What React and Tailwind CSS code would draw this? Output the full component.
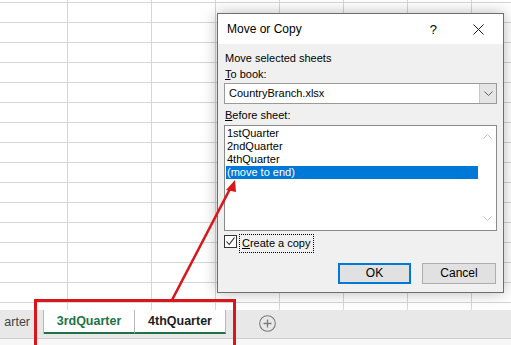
import React from 'react';

const colClasses = ['w-[68px]', 'w-[84px]', 'w-[64px]', 'w-[64px]', 'w-[64px]', 'w-[64px]', 'w-[64px]', 'w-[64px]'];

const GridRow = ({ height }) => (
  <div className={`flex shrink-0 border-b border-[#d6d6d6] ${height}`}>
    {colClasses.map((w, i) => (
      <div key={i} className={`shrink-0 border-r border-[#d6d6d6] ${w}`} />
    ))}
  </div>
);

const Chevron = ({ up = false, className = '' }) => (
  <svg width="9" height="5" viewBox="0 0 9 5" className={className}>
    <path d={up ? 'M0.5 4.5 L4.5 0.5 L8.5 4.5' : 'M0.5 0.5 L4.5 4.5 L8.5 0.5'} fill="none" stroke="currentColor" strokeWidth="1" />
  </svg>
);

const MoveCopyDialog = () => (
  <div className="absolute left-[217px] top-[13px] w-[287px] h-[280px] flex flex-col border border-[#6e6e6e] bg-[#f0f0f0] shadow-[0_0_14px_rgba(0,0,0,0.28)] text-[11px] leading-[13px] text-black">
    {/* title bar */}
    <div className="h-[30px] shrink-0 bg-white flex items-center pl-[9px] pr-[19px]">
      <span className="flex-1 text-[12px]">Move or Copy</span>
      <span className="text-[13px] mr-[36px]">?</span>
      <svg width="11" height="11" viewBox="0 0 11 11">
        <path d="M0.5 0.5 L10.5 10.5 M10.5 0.5 L0.5 10.5" stroke="#1a1a1a" strokeWidth="1" />
      </svg>
    </div>

    <div className="flex flex-col px-[6px] pt-[8px]">
      <div className="pl-[1px]">Move selected sheets</div>
      <div className="pl-[1px] mt-[3px]"><span className="underline">T</span>o book:</div>

      <div className="mt-[2px] h-[21px] flex border border-[#9a9a9a] bg-white">
        <div className="flex-1 pl-[4px] flex items-center">CountryBranch.xlsx</div>
        <div className="w-[17px] bg-[#e5e5e5] border-l border-[#c8c8c8] flex items-center justify-center text-[#606060]">
          <Chevron />
        </div>
      </div>

      <div className="pl-[1px] mt-[5px]"><span className="underline">B</span>efore sheet:</div>

      <div className="mt-[3px] h-[106px] flex border border-[#8a8a8a] bg-white">
        <div className="flex-1 p-[1px] flex flex-col">
          <div className="h-[13px] pl-[1px]">1stQuarter</div>
          <div className="h-[13px] pl-[1px]">2ndQuarter</div>
          <div className="h-[13px] pl-[1px]">4thQuarter</div>
          <div className="h-[13px] pl-[1px] bg-[#0078d7] text-white">(move to end)</div>
        </div>
        <div className="w-[17px] flex flex-col items-center justify-between pt-[8px] pb-[9px] text-[#c4c4c4]">
          <Chevron up />
          <Chevron />
        </div>
      </div>

      <div className="mt-[3px] h-[19px] flex items-start">
        <div className="mt-[1px] w-[13px] h-[13px] border border-[#333] bg-white flex items-center justify-center">
          <svg width="11" height="11" viewBox="0 0 11 11">
            <path d="M1.5 5.5 L4.2 8.5 L9.5 1.5" fill="none" stroke="#222" strokeWidth="1.1" />
          </svg>
        </div>
        <div className="ml-[2px] h-[19px] border border-dotted border-black pl-[2px] pr-[2px] flex items-center">
          <span><span className="underline">C</span>reate a copy</span>
        </div>
      </div>

      <div className="mt-[10px] flex justify-end gap-[11px] pr-[1px]">
        <button className="w-[73px] h-[21px] border-2 border-[#0078d7] bg-[#e1e1e1] text-[12px]">OK</button>
        <button className="w-[74px] h-[21px] border border-[#adadad] bg-[#e1e1e1] text-[12px]">Cancel</button>
      </div>
    </div>
  </div>
);

const SheetTabs = () => (
  <div className="h-[29px] shrink-0 flex items-start bg-[#e8e8e8] border-b border-[#cfcfcf] text-[12.5px]">
    <div className="w-[44px] h-[24px] flex items-center justify-end pr-[13px] text-[#444] border-r border-[#b9b9b9]">
      arter
    </div>
    <div className="w-[91px] h-[24px] flex items-center justify-center bg-white border-r border-[#b9b9b9] border-b-2 border-b-[#217346] font-bold text-[#217346]">
      3rdQuarter
    </div>
    <div className="w-[91px] h-[24px] flex items-center justify-center bg-white border-r border-[#b9b9b9] border-b-2 border-b-[#217346] font-bold text-[#1e1e1e]">
      4thQuarter
    </div>
    <div className="ml-[33px] h-[26px] flex items-center">
      <svg width="17" height="17" viewBox="0 0 17 17">
        <circle cx="8.5" cy="8.5" r="7.8" fill="none" stroke="#7b7b7b" strokeWidth="1.1" />
        <path d="M8.5 4.5 V12.5 M4.5 8.5 H12.5" stroke="#7b7b7b" strokeWidth="1.3" />
      </svg>
    </div>
  </div>
);

export default function App() {
  return (
    <div className="relative w-[511px] h-[345px] overflow-hidden bg-white font-['Liberation_Sans',Arial,sans-serif]">
      <div className="flex flex-col h-full">
        <div className="h-[310px] shrink-0 overflow-hidden flex flex-col">
          <GridRow height="h-[3px]" />
          {Array.from({ length: 16 }).map((_, i) => (
            <GridRow key={i} height="h-[20px]" />
          ))}
        </div>
        <SheetTabs />
        <div className="flex-1 bg-[#f7f7f7]" />
      </div>

      <MoveCopyDialog />

      {/* annotation */}
      <svg className="absolute inset-0 pointer-events-none" width="511" height="345" viewBox="0 0 511 345">
        <rect x="35.5" y="300.5" width="199" height="46" fill="none" stroke="#d9161c" strokeWidth="3" />
        <path d="M172 300 L231 187" stroke="#d9161c" strokeWidth="2.6" />
        <polygon points="235,180 226,190 236,192" fill="#d9161c" />
      </svg>
    </div>
  );
}
